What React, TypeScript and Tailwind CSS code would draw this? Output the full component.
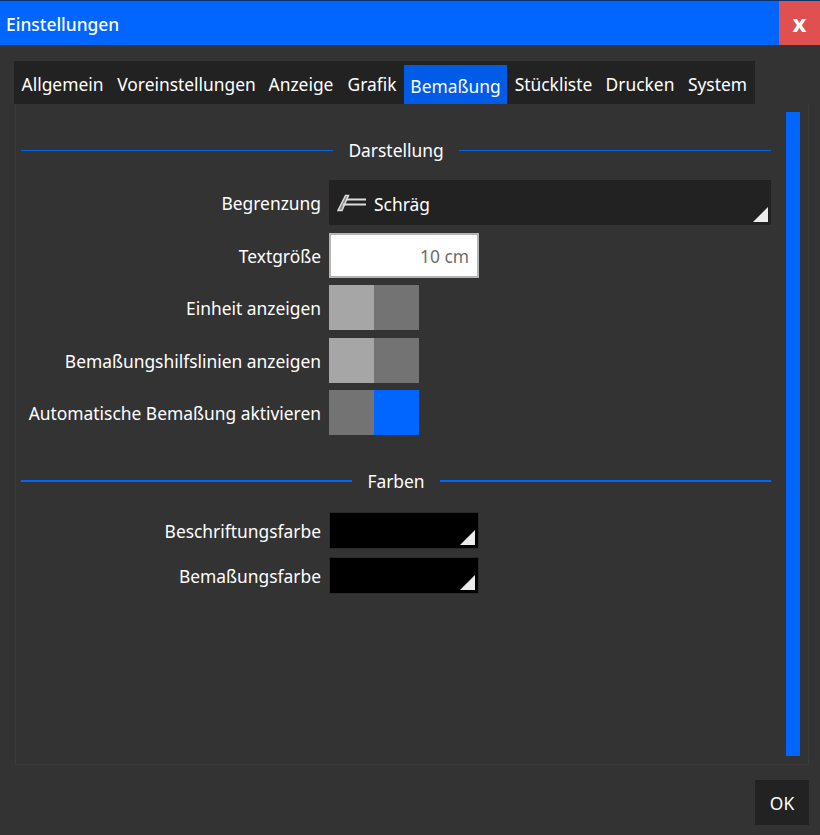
const tabs = [
  { label: "Allgemein", width: "w-[97px]" },
  { label: "Voreinstellungen", width: "w-[151px]" },
  { label: "Anzeige", width: "w-[78px]" },
  { label: "Grafik", width: "w-[64px]" },
  { label: "Bemaßung", width: "w-[103px]", active: true },
  { label: "Stückliste", width: "w-[93px]" },
  { label: "Drucken", width: "w-[80px]" },
  { label: "System", width: "w-[75px]" },
];

function Corner() {
  return (
    <svg width="15" height="15" viewBox="0 0 15 15" className="absolute right-[3px] bottom-[3px]">
      <polygon points="15,0 15,15 0,15" fill="#ececec" />
    </svg>
  );
}

function SectionTitle({ title, className, lineClass }: { title: string; className: string; lineClass: string }) {
  return (
    <div className={`flex h-[20px] items-center gap-[15px] ${className}`}>
      <div className={`flex-1 ${lineClass}`} />
      <span>{title}</span>
      <div className={`flex-1 ${lineClass}`} />
    </div>
  );
}

function Row({ label, className, children }: { label: string; className?: string; children: React.ReactNode }) {
  return (
    <div className={`flex items-center gap-2 ${className ?? ""}`}>
      <div className="w-[300px] whitespace-nowrap text-right">{label}</div>
      {children}
    </div>
  );
}

function Toggle({ on }: { on?: boolean }) {
  return (
    <div className="flex h-[45px] w-[90px]">
      <div className={`flex-1 ${on ? "bg-[#737373]" : "bg-[#a6a6a6]"}`} />
      <div className={`flex-1 ${on ? "bg-[#0066ff]" : "bg-[#737373]"}`} />
    </div>
  );
}

function ColorBox() {
  return (
    <div className="relative h-[37px] w-[150px] border border-[#2a2a2a] bg-black">
      <Corner />
    </div>
  );
}

export default function App() {
  return (
    <div className="flex h-[835px] w-[820px] flex-col overflow-hidden bg-[#333333] text-[17.4px] leading-[24px] text-white [font-family:'Noto_Sans',sans-serif]">
      <div className="flex h-[45px] items-center border-t border-[#10336b] bg-[#0066ff]">
        <div className="flex-1 pt-[2px] pl-[6px] font-medium">Einstellungen</div>
        <div className="flex h-full w-[41px] items-center justify-center bg-[#e05050] text-[24px] font-bold">x</div>
      </div>

      <div className="mx-[14px] mt-4 flex h-[43px] w-[741px] items-end bg-[#222222]">
        {tabs.map((tab) => (
          <div
            key={tab.label}
            className={
              tab.active
                ? `flex h-[39px] items-center justify-center bg-[#005ce6] pt-[2px] ${tab.width}`
                : `flex h-[43px] items-center justify-center pt-[2px] ${tab.width}`
            }
          >
            {tab.label}
          </div>
        ))}
      </div>

      <div className="ml-[15px] flex h-[661px] w-[794px] border border-t-0 border-[#3b3b3b] pt-2 pr-2 pl-[5px]">
        <div className="w-[750px]">
          <SectionTitle title="Darstellung" className="mt-7" lineClass="h-px bg-[#0a62dc]" />

          <Row label="Begrenzung" className="mt-5">
            <div className="relative flex h-[45px] w-[442px] items-center gap-2 bg-[#222222] pl-2">
              <svg width="29" height="18" viewBox="0 0 29 18" fill="none" stroke="#dcdcdc">
                <path d="M1 16.5 L8.5 1.5 H11.5 L5 16.5 Z" fill="#8a8a8a" strokeWidth="1.5" />
                <path d="M9 5.5 H29" strokeWidth="2" />
                <path d="M6 10.5 H29" strokeWidth="2" />
              </svg>
              <span className="pt-[2px]">Schräg</span>
              <Corner />
            </div>
          </Row>

          <Row label="Textgröße" className="mt-2">
            <div className="flex h-[45px] w-[150px] items-center justify-end border-2 border-[#b5b5b5] bg-white pr-2 text-[#6b6b6b]">
              10 cm
            </div>
          </Row>

          <Row label="Einheit anzeigen" className="mt-[7px]">
            <Toggle />
          </Row>
          <Row label="Bemaßungshilfslinien anzeigen" className="mt-2">
            <Toggle />
          </Row>
          <Row label="Automatische Bemaßung aktivieren" className="mt-[7px]">
            <Toggle on />
          </Row>

          <SectionTitle title="Farben" className="mt-9" lineClass="h-[2px] bg-[#0066ff]" />

          <Row label="Beschriftungsfarbe" className="mt-[21px]">
            <ColorBox />
          </Row>
          <Row label="Bemaßungsfarbe" className="mt-2">
            <ColorBox />
          </Row>
        </div>
        <div className="ml-[15px] h-[644px] w-[15px] bg-[#0066ff]" />
      </div>

      <div className="mt-[15px] mr-[11px] flex justify-end">
        <div className="flex h-[45px] w-[54px] items-center justify-center bg-[#222222]">OK</div>
      </div>
    </div>
  );
}
